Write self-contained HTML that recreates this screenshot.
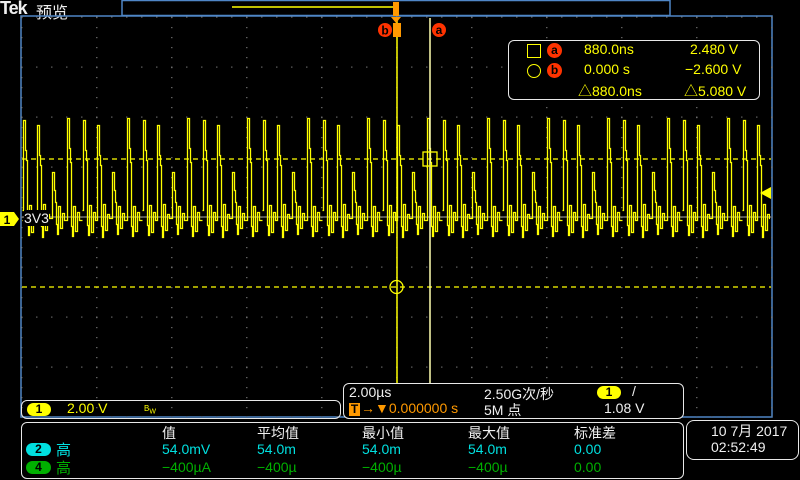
<!DOCTYPE html>
<html><head><meta charset="utf-8"><style>
body{margin:0;width:800px;height:480px;background:#000;overflow:hidden;position:relative;font-family:"Liberation Sans","Noto Sans CJK SC",sans-serif}
.a{position:absolute;white-space:nowrap}
.box{position:absolute;border:1.5px solid #e8e8e8;border-radius:8px;box-sizing:border-box}
.y{color:#ffff00}.w{color:#f0f0f0}.c{color:#00e0e0}.g{color:#00b000}.o{color:#ff9900}
.f{font-size:14px}
</style></head><body>
<div class="a w" style="left:0;top:-2px;font-size:18px;font-weight:bold;letter-spacing:-1px">Tek</div>
<div class="a w" style="left:36px;top:-1px;font-size:16px">预览</div>
<svg width="800" height="480" style="position:absolute;left:0;top:0">
<defs>
<pattern id="gx" x="21.2" y="17" width="75" height="10" patternUnits="userSpaceOnUse"><rect x="0" y="0" width="1.2" height="1.2" fill="#777"/></pattern>
<pattern id="gy" x="21.2" y="16.5" width="15" height="50" patternUnits="userSpaceOnUse"><rect x="0" y="0" width="1.2" height="1.2" fill="#777"/></pattern>
<pattern id="wv" x="22.5" y="110.5" width="60" height="140" patternUnits="userSpaceOnUse">
<path fill="none" stroke="#ffff00" stroke-width="1.3" d="M0,100 H1 V10 H3 V40 H4 V50 H5 V115 H6 V125 H7 V95 H9 V122 H11 V102 H13 V110 H15 V15 H17 V45 H18 V55 H19 V116 H20 V127 H21 V94 H23 V120 H25 V104 H27 V108 H30 V62 H32 V80 H33 V92 H34 V114 H35 V124 H36 V96 H38 V118 H40 V103 H42 V110 H45 V8 H47 V38 H48 V52 H49 V116 H50 V126 H51 V96 H53 V121 H55 V102 H57 V110 H60"/>
</pattern>
</defs>
<rect x="122" y="0.5" width="548" height="15" fill="none" stroke="#4f86c6" stroke-width="1.5"/>
<line x1="232" y1="7" x2="393" y2="7" stroke="#ffff00" stroke-width="1.5"/>
<rect x="21" y="16" width="751" height="401" fill="none" stroke="#4f86c6" stroke-width="1.5"/>
<rect x="21" y="17" width="752" height="400" fill="url(#gx)"/>
<rect x="21" y="16" width="752" height="401" fill="url(#gy)"/>
<line x1="22" y1="217" x2="771" y2="217" stroke="#888" stroke-width="1.2"/>
<rect x="22" y="110" width="748" height="140" fill="url(#wv)"/>
<line x1="22" y1="159" x2="771" y2="159" stroke="#ffff00" stroke-width="1.2" stroke-dasharray="5,4"/>
<line x1="22" y1="287" x2="771" y2="287" stroke="#ffff00" stroke-width="1.2" stroke-dasharray="5,4"/>
<line x1="397" y1="18" x2="397" y2="416" stroke="#ffff00" stroke-width="1.5"/>
<line x1="430" y1="18" x2="430" y2="416" stroke="#ffffb0" stroke-width="1.5"/>
<rect x="423" y="152" width="14" height="14" fill="none" stroke="#ffff00" stroke-width="1.3"/>
<circle cx="396.5" cy="287" r="6.5" fill="none" stroke="#ffff00" stroke-width="1.3"/>
<rect x="393" y="2" width="6" height="14" fill="#ff9900"/>
<polygon points="391,17 401,17 396,23" fill="#ff9900"/>
<rect x="393" y="23" width="8" height="14" fill="#ff9900"/>
<circle cx="385" cy="30" r="7" fill="#ff3300"/>
<text x="385" y="34.5" font-size="12" font-weight="bold" fill="#000" text-anchor="middle" font-family="Liberation Sans">b</text>
<circle cx="439" cy="30" r="7" fill="#ff3300"/>
<text x="439" y="34" font-size="12" font-weight="bold" fill="#000" text-anchor="middle" font-family="Liberation Sans">a</text>
<polygon points="0,212 14,212 19,219 14,226 0,226" fill="#ffff00"/>
<text x="7" y="224" font-size="12" font-weight="bold" fill="#000" text-anchor="middle" font-family="Liberation Sans">1</text>
<polygon points="760,193 771,187 771,199" fill="#ffff00"/>
<line x1="762" y1="193" x2="771" y2="193" stroke="#ffff00" stroke-width="2"/>
</svg>
<div class="a w f" style="left:24px;top:210px;background:#000;line-height:16px">3V3</div>
<div class="box" style="left:508px;top:40px;width:252px;height:60px;border-radius:6px;background:#000"></div>
<div class="a" style="left:527px;top:44px;width:12px;height:12px;border:1.3px solid #ffff00"></div>
<div class="a" style="left:527px;top:64px;width:12px;height:12px;border:1.3px solid #ffff00;border-radius:50%"></div>
<div class="a" style="left:547px;top:43px;width:15px;height:15px;border-radius:50%;background:#ff3300;color:#000;font-weight:bold;font-size:12px;text-align:center;line-height:14px">a</div>
<div class="a" style="left:547px;top:63px;width:15px;height:15px;border-radius:50%;background:#ff3300;color:#000;font-weight:bold;font-size:12px;text-align:center;line-height:15px">b</div>
<div class="a y f" style="left:584px;top:41px">880.0ns</div>
<div class="a y f" style="left:584px;top:61px">0.000 s</div>
<div class="a y f" style="left:578px;top:81px">△880.0ns</div>
<div class="a y f" style="left:690px;top:41px">2.480 V</div>
<div class="a y f" style="left:685px;top:61px">−2.600 V</div>
<div class="a y f" style="left:684px;top:81px">△5.080 V</div>

<div class="box" style="left:21px;top:400px;width:320px;height:19px;border-radius:6px"></div>
<div class="a" style="left:27px;top:403px;width:24px;height:13px;border-radius:7px;background:#ffff00;color:#000;font-size:12px;font-weight:bold;text-align:center;line-height:13px">1</div>
<div class="a y f" style="left:67px;top:400px">2.00 V</div>
<div class="a y" style="left:144px;top:404px;font-size:8px">B<sub style="font-size:7px">W</sub></div>

<div class="box" style="left:343px;top:383px;width:341px;height:36px;border-radius:6px;background:#000"></div>
<div class="a w f" style="left:349px;top:384px">2.00µs</div>
<div class="a" style="left:349px;top:403px;width:11px;height:13px;background:#ff9900;color:#000;font-size:12px;font-weight:bold;line-height:13px;text-align:center">T</div>
<div class="a o f" style="left:361px;top:400px">→▼0.000000 s</div>
<div class="a w f" style="left:484px;top:384px">2.50G次/秒</div>
<div class="a w f" style="left:484px;top:400px">5M 点</div>
<div class="a" style="left:597px;top:386px;width:24px;height:13px;border-radius:7px;background:#ffff00;color:#000;font-size:12px;font-weight:bold;text-align:center;line-height:13px">1</div>
<div class="a w f" style="left:632px;top:383px">/</div>
<div class="a w f" style="left:604px;top:400px">1.08 V</div>

<div class="box" style="left:21px;top:422px;width:663px;height:57px;border-radius:6px"></div>
<div class="a" style="left:26px;top:443px;width:25px;height:13px;border-radius:7px;background:#00e0e0;color:#000;font-size:12px;font-weight:bold;text-align:center;line-height:13px">2</div>
<div class="a" style="left:26px;top:461px;width:25px;height:13px;border-radius:7px;background:#00b000;color:#000;font-size:12px;font-weight:bold;text-align:center;line-height:13px">4</div>
<div class="a c" style="left:56px;top:439px;font-size:15px">高</div>
<div class="a g" style="left:56px;top:457px;font-size:15px">高</div>
<div class="a w f" style="left:162px;top:423px">值</div>
<div class="a w f" style="left:257px;top:423px">平均值</div>
<div class="a w f" style="left:362px;top:423px">最小值</div>
<div class="a w f" style="left:468px;top:423px">最大值</div>
<div class="a w f" style="left:574px;top:423px">标准差</div>
<div class="a c f" style="left:162px;top:441px">54.0mV</div>
<div class="a c f" style="left:257px;top:441px">54.0m</div>
<div class="a c f" style="left:362px;top:441px">54.0m</div>
<div class="a c f" style="left:468px;top:441px">54.0m</div>
<div class="a c f" style="left:574px;top:441px">0.00</div>
<div class="a g f" style="left:162px;top:459px">−400µA</div>
<div class="a g f" style="left:257px;top:459px">−400µ</div>
<div class="a g f" style="left:362px;top:459px">−400µ</div>
<div class="a g f" style="left:468px;top:459px">−400µ</div>
<div class="a g f" style="left:574px;top:459px">0.00</div>

<div class="box" style="left:686px;top:420px;width:113px;height:40px;border-radius:8px"></div>
<div class="a w f" style="left:711px;top:421px">10 7月 2017</div>
<div class="a w f" style="left:711px;top:439px">02:52:49</div>
</body></html>
